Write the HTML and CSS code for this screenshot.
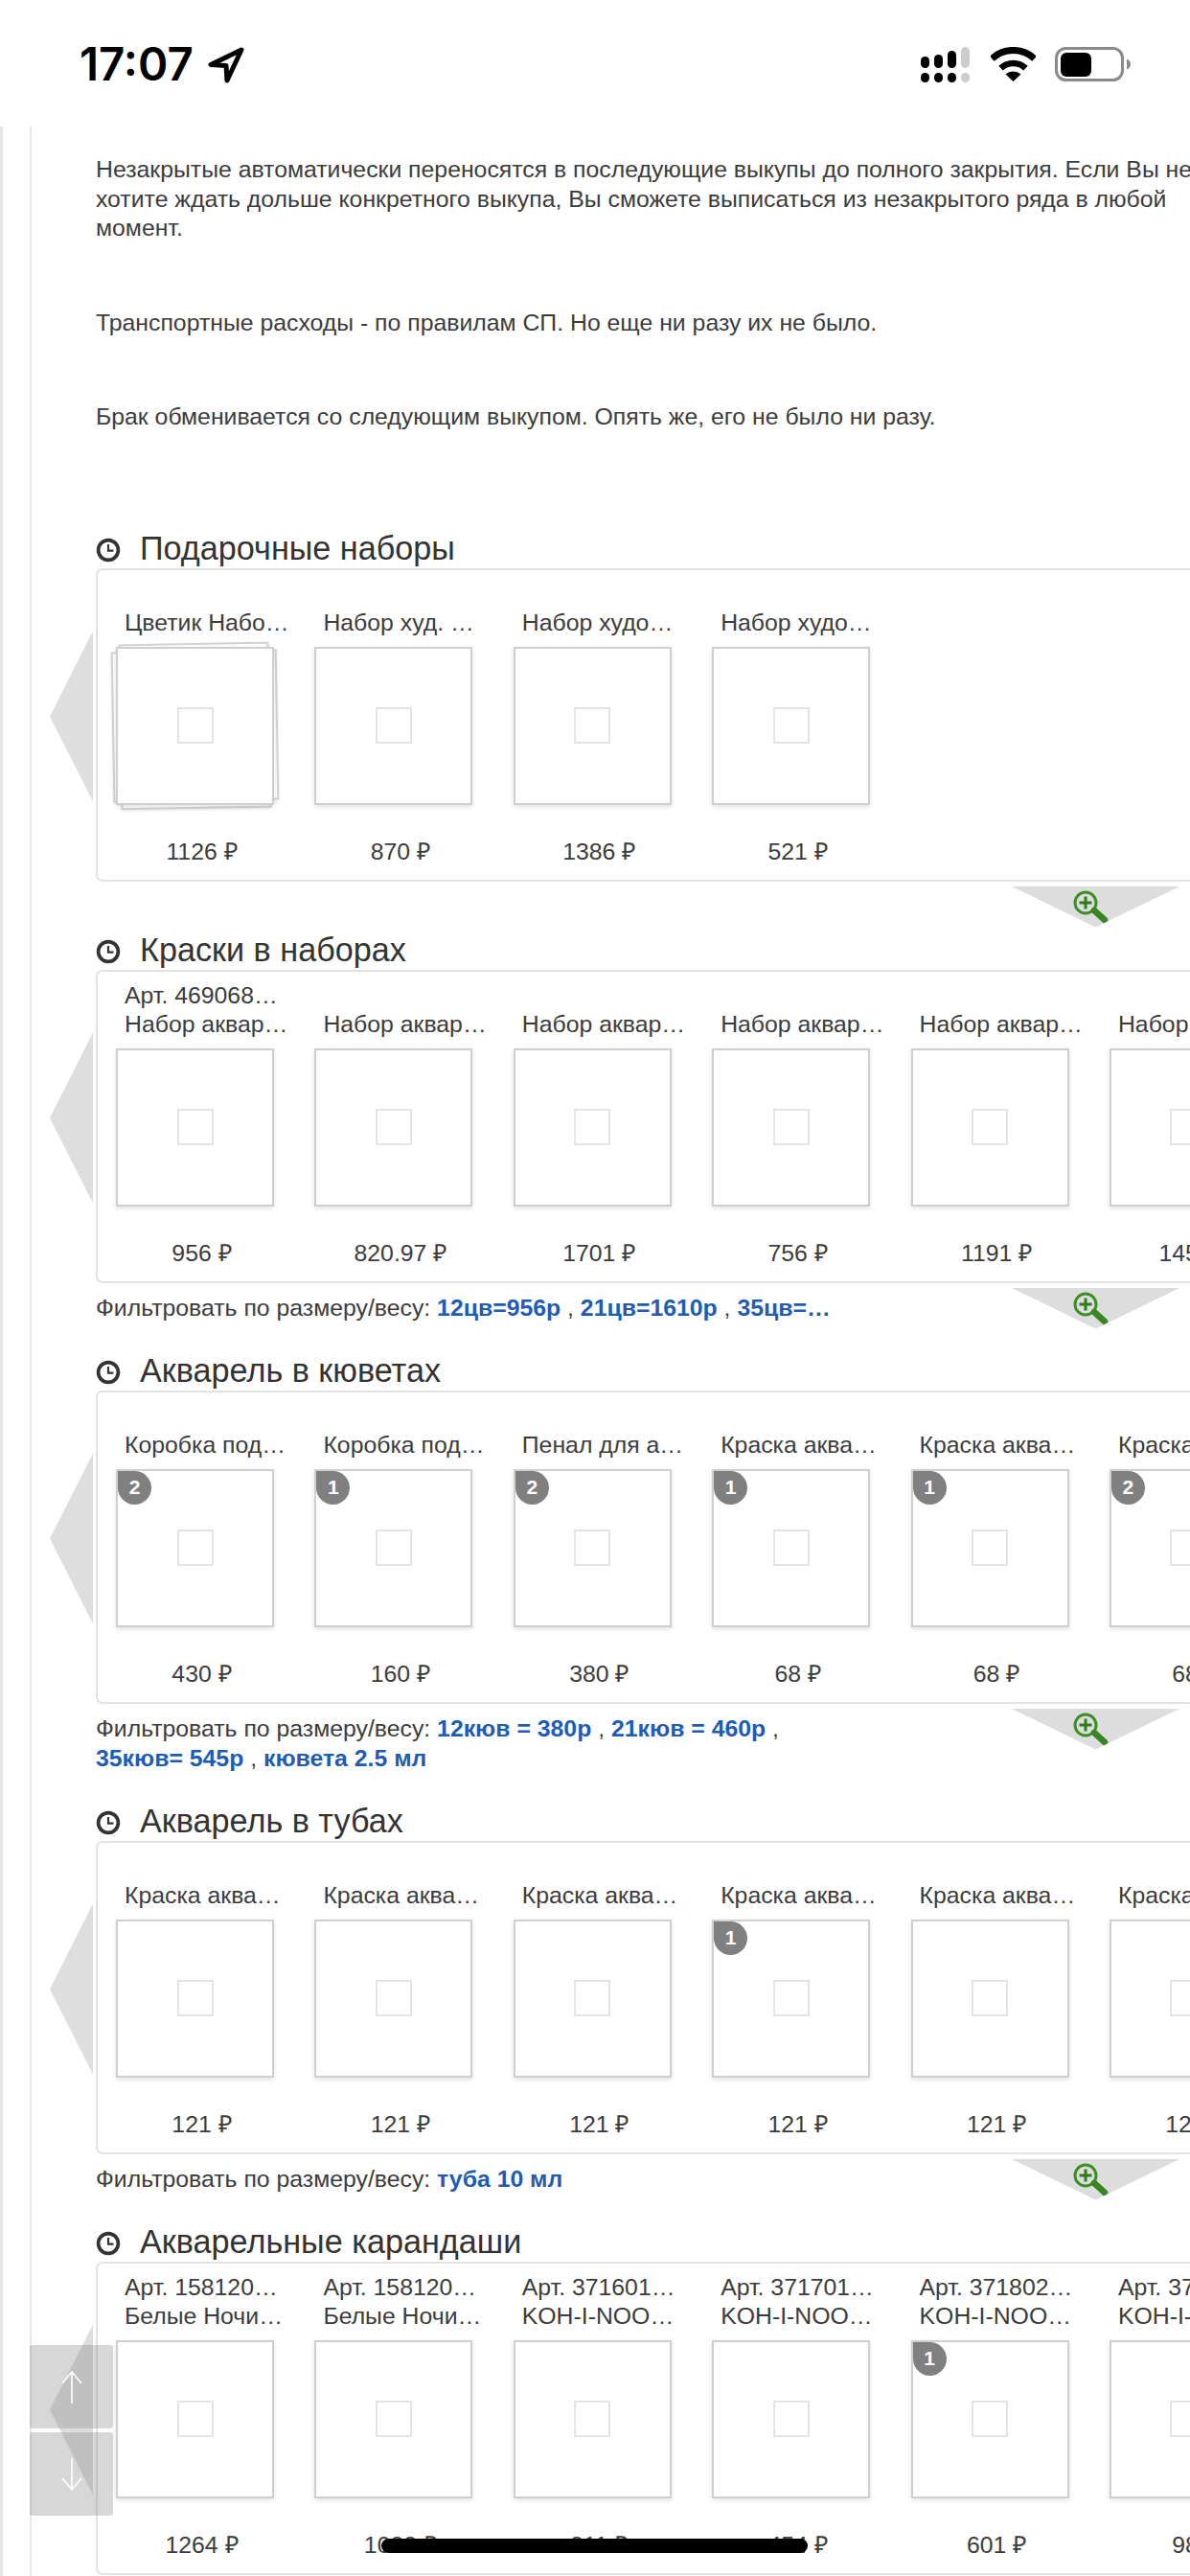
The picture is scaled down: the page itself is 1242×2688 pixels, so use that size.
FILE: index.html
```html
<!DOCTYPE html>
<html lang="ru">
<head>
<meta charset="utf-8">
<title>Каталог</title>
<link rel="stylesheet" href="styles.css">
</head>
<body>
<svg class="sprite" width="0" height="0" aria-hidden="true">
  <symbol id="clock" viewBox="0 0 24 24"><circle cx="12" cy="12" r="9.6" fill="none" stroke="#333" stroke-width="3.4"/><path d="M12 6.5V12.6H17" fill="none" stroke="#333" stroke-width="2"/></symbol>
  <symbol id="zoom" viewBox="0 0 38 36"><circle cx="14" cy="14" r="11" fill="none" stroke="#3c8f22" stroke-width="3"/><path d="M14 7.5V20.5M7.5 14H20.5" stroke="#2f7d1c" stroke-width="3"/><path d="M23 22L34 32" stroke="#3a8424" stroke-width="6.5" stroke-linecap="round"/></symbol>
</svg>
<header class="status">
  <div class="status-left">
    <span class="time">17:07</span>
    <svg class="nav-arrow" viewBox="0 0 38 38"><path d="M35 3L3 18.5L19 19.5L20 35Z" fill="none" stroke="#000" stroke-width="5" stroke-linejoin="round"/></svg>
  </div>
  <div class="status-right">
    <svg class="signal" viewBox="0 0 51 38"><g fill="#000"><rect x="0" y="10" width="9" height="12" rx="4.5"/><rect x="14" y="8" width="9" height="14" rx="4.5"/><rect x="28" y="4" width="9" height="18" rx="4.5"/><rect x="0" y="27" width="9" height="10" rx="4.5"/><rect x="14" y="27" width="9" height="10" rx="4.5"/><rect x="28" y="27" width="9" height="10" rx="4.5"/></g><g fill="#ccc"><rect x="42" y="0" width="9" height="22" rx="4.5"/><rect x="42" y="27" width="9" height="10" rx="4.5"/></g></svg>
    <svg class="wifi" viewBox="0 0 47 36"><path d="M1.3 12.2A32.5 32.5 0 0 1 45.7 12.2" fill="none" stroke="#000" stroke-width="7"/><path d="M10.5 22.1A19 19 0 0 1 36.5 22.1" fill="none" stroke="#000" stroke-width="6.5"/><path d="M23.5 36L15.5 28.5A12 12 0 0 1 31.5 28.5Z" fill="#000"/></svg>
    <svg class="battery" viewBox="0 0 80 36"><rect x="1.5" y="1.5" width="69" height="33" rx="10" fill="none" stroke="#8a8a8a" stroke-width="3"/><rect x="6" y="6" width="32" height="25" rx="6" fill="#000"/><path d="M75 12.5Q79 14 79 18Q79 22 75 23.5Z" fill="#8a8a8a"/></svg>
  </div>
</header>

<div class="rail">
<main class="content">
  <p class="para">Незакрытые автоматически переносятся в последующие выкупы до полного закрытия. Если Вы не хотите ждать дольше конкретного выкупа, Вы сможете выписаться из незакрытого ряда в любой момент.</p>
  <p class="para">Транспортные расходы - по правилам СП. Но еще ни разу их не было.</p>
  <p class="para">Брак обменивается со следующим выкупом. Опять же, его не было ни разу.</p>

  <section class="section section-plain">
    <h2 class="sec-title"><svg class="clock"><use href="#clock"/></svg>Подарочные наборы</h2>
    <div class="panel">
      <div class="arrow-left"></div>
      <div class="items">
        <article class="item"><div class="label"><span>Цветик Набо…</span></div><div class="thumb thumb-stack"><span class="ph"></span></div><div class="price">1126 ₽</div></article>
        <article class="item"><div class="label"><span>Набор худ. …</span></div><div class="thumb"><span class="ph"></span></div><div class="price">870 ₽</div></article>
        <article class="item"><div class="label"><span>Набор худо…</span></div><div class="thumb"><span class="ph"></span></div><div class="price">1386 ₽</div></article>
        <article class="item"><div class="label"><span>Набор худо…</span></div><div class="thumb"><span class="ph"></span></div><div class="price">521 ₽</div></article>
      </div>
    </div>
    <div class="more"><svg class="zoom"><use href="#zoom"/></svg></div>
  </section>

  <section class="section">
    <h2 class="sec-title"><svg class="clock"><use href="#clock"/></svg>Краски в наборах</h2>
    <div class="panel">
      <div class="arrow-left"></div>
      <div class="items">
        <article class="item"><div class="label"><span>Арт. 469068…</span><span>Набор аквар…</span></div><div class="thumb"><span class="ph"></span></div><div class="price">956 ₽</div></article>
        <article class="item"><div class="label"><span>Набор аквар…</span></div><div class="thumb"><span class="ph"></span></div><div class="price">820.97 ₽</div></article>
        <article class="item"><div class="label"><span>Набор аквар…</span></div><div class="thumb"><span class="ph"></span></div><div class="price">1701 ₽</div></article>
        <article class="item"><div class="label"><span>Набор аквар…</span></div><div class="thumb"><span class="ph"></span></div><div class="price">756 ₽</div></article>
        <article class="item"><div class="label"><span>Набор аквар…</span></div><div class="thumb"><span class="ph"></span></div><div class="price">1191 ₽</div></article>
        <article class="item"><div class="label"><span>Набор аквар…</span></div><div class="thumb"><span class="ph"></span></div><div class="price">1452 ₽</div></article>
      </div>
    </div>
    <div class="more"><svg class="zoom"><use href="#zoom"/></svg></div>
    <p class="filter">Фильтровать по размеру/весу: <a>12цв=956р</a> , <a>21цв=1610р</a> , <a>35цв=…</a></p>
  </section>

  <section class="section">
    <h2 class="sec-title"><svg class="clock"><use href="#clock"/></svg>Акварель в кюветах</h2>
    <div class="panel">
      <div class="arrow-left"></div>
      <div class="items">
        <article class="item"><div class="label"><span>Коробка под…</span></div><div class="thumb"><b class="badge">2</b><span class="ph"></span></div><div class="price">430 ₽</div></article>
        <article class="item"><div class="label"><span>Коробка под…</span></div><div class="thumb"><b class="badge">1</b><span class="ph"></span></div><div class="price">160 ₽</div></article>
        <article class="item"><div class="label"><span>Пенал для а…</span></div><div class="thumb"><b class="badge">2</b><span class="ph"></span></div><div class="price">380 ₽</div></article>
        <article class="item"><div class="label"><span>Краска аква…</span></div><div class="thumb"><b class="badge">1</b><span class="ph"></span></div><div class="price">68 ₽</div></article>
        <article class="item"><div class="label"><span>Краска аква…</span></div><div class="thumb"><b class="badge">1</b><span class="ph"></span></div><div class="price">68 ₽</div></article>
        <article class="item"><div class="label"><span>Краска аква…</span></div><div class="thumb"><b class="badge">2</b><span class="ph"></span></div><div class="price">68 ₽</div></article>
      </div>
    </div>
    <div class="more"><svg class="zoom"><use href="#zoom"/></svg></div>
    <p class="filter">Фильтровать по размеру/весу: <a>12кюв = 380р</a> , <a>21кюв = 460р</a> ,<br><a>35кюв= 545р</a> , <a>кювета 2.5 мл</a></p>
  </section>

  <section class="section">
    <h2 class="sec-title"><svg class="clock"><use href="#clock"/></svg>Акварель в тубах</h2>
    <div class="panel">
      <div class="arrow-left"></div>
      <div class="items">
        <article class="item"><div class="label"><span>Краска аква…</span></div><div class="thumb"><span class="ph"></span></div><div class="price">121 ₽</div></article>
        <article class="item"><div class="label"><span>Краска аква…</span></div><div class="thumb"><span class="ph"></span></div><div class="price">121 ₽</div></article>
        <article class="item"><div class="label"><span>Краска аква…</span></div><div class="thumb"><span class="ph"></span></div><div class="price">121 ₽</div></article>
        <article class="item"><div class="label"><span>Краска аква…</span></div><div class="thumb"><b class="badge">1</b><span class="ph"></span></div><div class="price">121 ₽</div></article>
        <article class="item"><div class="label"><span>Краска аква…</span></div><div class="thumb"><span class="ph"></span></div><div class="price">121 ₽</div></article>
        <article class="item"><div class="label"><span>Краска аква…</span></div><div class="thumb"><span class="ph"></span></div><div class="price">121 ₽</div></article>
      </div>
    </div>
    <div class="more"><svg class="zoom"><use href="#zoom"/></svg></div>
    <p class="filter">Фильтровать по размеру/весу: <a>туба 10 мл</a></p>
  </section>

  <section class="section">
    <h2 class="sec-title"><svg class="clock"><use href="#clock"/></svg>Акварельные карандаши</h2>
    <div class="panel">
      <div class="arrow-left"></div>
      <div class="items">
        <article class="item"><div class="label"><span>Арт. 158120…</span><span>Белые Ночи…</span></div><div class="thumb"><span class="ph"></span></div><div class="price">1264 ₽</div></article>
        <article class="item"><div class="label"><span>Арт. 158120…</span><span>Белые Ночи…</span></div><div class="thumb"><span class="ph"></span></div><div class="price">1088 ₽</div></article>
        <article class="item"><div class="label"><span>Арт. 371601…</span><span>KOH-I-NOO…</span></div><div class="thumb"><span class="ph"></span></div><div class="price">811 ₽</div></article>
        <article class="item"><div class="label"><span>Арт. 371701…</span><span>KOH-I-NOO…</span></div><div class="thumb"><span class="ph"></span></div><div class="price">454 ₽</div></article>
        <article class="item"><div class="label"><span>Арт. 371802…</span><span>KOH-I-NOO…</span></div><div class="thumb"><b class="badge">1</b><span class="ph"></span></div><div class="price">601 ₽</div></article>
        <article class="item"><div class="label"><span>Арт. 371803…</span><span>KOH-I-NOO…</span></div><div class="thumb"><span class="ph"></span></div><div class="price">98 ₽</div></article>
      </div>
    </div>
  </section>
</main>
</div>

<div class="scroll-btns">
  <button class="scroll-btn"><svg viewBox="0 0 24 36"><path d="M12 35V2M2 14L12 2L22 14" fill="none" stroke="#fff" stroke-width="1.6"/></svg></button>
  <button class="scroll-btn"><svg viewBox="0 0 24 36"><path d="M12 1V34M2 22L12 34L22 22" fill="none" stroke="#fff" stroke-width="1.6"/></svg></button>
</div>
<div class="home-bar"></div>
</body>
</html>
```
FILE: styles.css
```css
* { box-sizing: border-box; }
html, body {
  margin: 0;
  width: 1242px;
  height: 2688px;
  overflow: hidden;
  background: #fff;
  font-family: "Liberation Sans", Arial, sans-serif;
  color: #3c3c3c;
}
.sprite { position: absolute; }

/* status bar */
.status {
  height: 132px;
  display: flex;
  justify-content: space-between;
  padding: 49px 61px 0 83px;
}
.status-left { display: flex; align-items: flex-start; gap: 15px; }
.time {
  font: 600 47.5px/36px Inter, "Liberation Sans", sans-serif;
  color: #000;
  letter-spacing: 0;
}
.nav-arrow { width: 38px; height: 38px; }
.status-right { display: flex; align-items: flex-start; }
.signal { width: 51px; height: 38px; }
.wifi { width: 47px; height: 36px; margin-left: 22px; }
.battery { width: 80px; height: 36px; margin-left: 20px; }

/* page rails */
.rail {
  border-left: 3px solid #e6e6e6;
  height: 2556px;
}
.content {
  margin-left: 28px;
  border-left: 2px solid #e6e6e6;
  padding: 30px 0 0 67px;
  width: 1300px;
  height: 100%;
}

.para {
  margin: 0 0 68px;
  width: 1150px;
  font-size: 24.8px;
  line-height: 30.5px;
}
.para:last-of-type { margin-bottom: 100px; }

.section { position: relative; margin-bottom: 29px; }
.section-plain { margin-bottom: 50px; }
.sec-title {
  margin: 0;
  height: 42px;
  display: flex;
  align-items: center;
  gap: 20px;
  font-size: 34.2px;
  font-weight: 400;
  line-height: 42px;
  color: #333;
}
.clock { width: 26px; height: 26px; flex: none; margin-top: 4px; }

.panel {
  position: relative;
  width: 1300px;
  height: 327px;
  border: 2px solid #e2e2e2;
  border-radius: 7px;
  padding-left: 19px;
}
.arrow-left {
  position: absolute;
  left: -50px;
  top: 64px;
  width: 45px;
  height: 178px;
  background: #dedede;
  clip-path: polygon(100% 0, 100% 100%, 0 50%);
}
.items {
  display: grid;
  grid-auto-flow: column;
  grid-auto-columns: 207.4px;
}
.item { width: 190px; isolation: isolate; }
.label {
  height: 80px;
  display: flex;
  flex-direction: column;
  justify-content: flex-end;
  padding: 0 0 9px 9px;
  font-size: 24.8px;
  line-height: 30.5px;
  white-space: nowrap;
}
.thumb {
  position: relative;
  width: 165px;
  height: 165px;
  display: flex;
  align-items: center;
  justify-content: center;
  background: #fff;
  border: 2px solid #cfcfcf;
  box-shadow: 0 2px 5px rgba(0, 0, 0, .12);
}
.thumb-stack::before,
.thumb-stack::after {
  content: "";
  position: absolute;
  z-index: -1;
  background: #fff;
  border: 2px solid #d2d2d2;
  box-shadow: 0 1px 3px rgba(0, 0, 0, .1);
  transform: rotate(-1deg);
}
.thumb-stack::before { inset: -6px 2px; }
.thumb-stack::after { inset: 2px -6px; }
.ph {
  width: 38px;
  height: 38px;
  border: 2px solid #e4e4e4;
}
.badge {
  position: absolute;
  left: 0;
  top: 0;
  width: 35px;
  height: 35px;
  display: flex;
  align-items: center;
  justify-content: center;
  background: #808080;
  border-radius: 0 50% 50% 50%;
  color: #fff;
  font-size: 21px;
  font-weight: 700;
}
.price {
  width: 179px;
  margin-top: 33px;
  text-align: center;
  font-size: 24.8px;
  line-height: 31px;
}

.more {
  position: absolute;
  left: 955px;
  top: 374px;
  width: 177px;
  height: 43px;
  background: #dddddd;
  clip-path: polygon(0 0, 100% 0, 50% 100%);
}
.zoom {
  position: absolute;
  left: 64px;
  top: 3px;
  width: 38px;
  height: 36px;
}

.filter {
  margin: 10px 0 0;
  font-size: 24.8px;
  line-height: 31px;
}
.filter a { color: #1f5cb4; font-weight: 700; }

/* floating controls */
.scroll-btns {
  position: fixed;
  left: 31px;
  top: 2447px;
  display: flex;
  flex-direction: column;
  gap: 4px;
}
.scroll-btn {
  display: flex;
  align-items: center;
  justify-content: center;
  width: 87px;
  height: 87px;
  padding: 0;
  border: 0;
  border-radius: 3px;
  background: rgba(130, 130, 130, .32);
}
.scroll-btn svg { width: 24px; height: 36px; }
.home-bar {
  position: fixed;
  left: 398px;
  top: 2649px;
  width: 445px;
  height: 15px;
  border-radius: 8px;
  background: #000;
}
```
